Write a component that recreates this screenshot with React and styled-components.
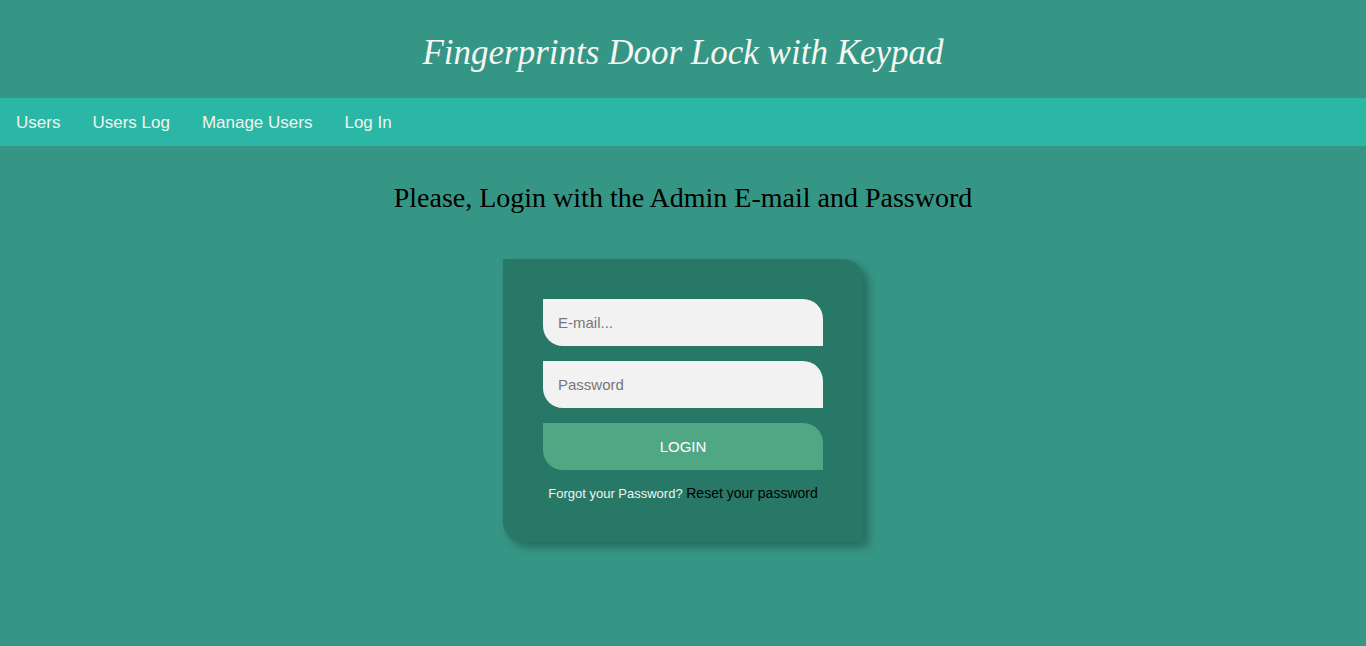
import React from "react";
import styled, { createGlobalStyle } from "styled-components";

const GlobalStyle = createGlobalStyle`
  html, body {
    margin: 0;
    padding: 0;
    background-color: #369685;
    font-family: "Liberation Serif", "Times New Roman", serif;
  }
`;

const Page = styled.div`
  min-height: 646px;
  background-color: #369685;
`;

const Header = styled.header`
  height: 98px;
  box-sizing: border-box;
  padding-top: 8px;
  display: flex;
  align-items: center;
  justify-content: center;

  h1 {
    margin: 0;
    font-family: "Liberation Serif", "Times New Roman", serif;
    font-style: italic;
    font-weight: normal;
    font-size: 35px;
    color: #f4f7f2;
  }
`;

const Nav = styled.nav`
  height: 48px;
  background-color: #2ab7a5;
  display: flex;
  align-items: center;
`;

const NavLink = styled.a`
  padding: 0 16px;
  font-family: "Liberation Sans", Arial, sans-serif;
  font-size: 17px;
  line-height: 20px;
  margin-top: 1px;
  color: #eef5ef;
  text-decoration: none;
  cursor: pointer;
`;

const Heading = styled.h2`
  margin: 36px 0 0;
  text-align: center;
  font-family: "Liberation Serif", "Times New Roman", serif;
  font-weight: normal;
  font-size: 28px;
  line-height: 32px;
  color: #000;
`;

const Card = styled.form`
  width: 280px;
  margin: 45px auto 0;
  padding: 40px;
  background-color: #287868;
  border-radius: 0 20px 0 20px;
  box-shadow: 5px 5px 10px rgba(0, 0, 0, 0.3);
  display: flex;
  flex-direction: column;
  gap: 15px;
`;

const Input = styled.input`
  box-sizing: border-box;
  width: 100%;
  height: 47px;
  border: none;
  outline: none;
  border-radius: 0 20px 0 20px;
  background-color: #f2f2f2;
  padding: 0 15px;
  font-family: "Liberation Sans", Arial, sans-serif;
  font-size: 15px;
  color: #333;

  &::placeholder {
    color: #777;
  }
`;

const Button = styled.button`
  width: 100%;
  height: 47px;
  border: none;
  border-radius: 0 20px 0 20px;
  background-color: #4fa883;
  color: #fff;
  font-family: "Liberation Sans", Arial, sans-serif;
  font-size: 15px;
  cursor: pointer;
`;

const Message = styled.p`
  margin: 0;
  text-align: center;
  font-family: "Liberation Sans", Arial, sans-serif;
  font-size: 13px;
  line-height: 16px;
  color: #eef5ef;

  a {
    font-size: 14px;
    color: #000;
    text-decoration: none;
  }
`;

const App = () => {
  return (
    <Page>
      <GlobalStyle />
      <Header>
        <h1>Fingerprints Door Lock with Keypad</h1>
      </Header>
      <Nav>
        <NavLink>Users</NavLink>
        <NavLink>Users Log</NavLink>
        <NavLink>Manage Users</NavLink>
        <NavLink>Log In</NavLink>
      </Nav>
      <Heading>Please, Login with the Admin E-mail and Password</Heading>
      <Card onSubmit={(e) => e.preventDefault()}>
        <Input type="email" placeholder="E-mail..." />
        <Input type="password" placeholder="Password" />
        <Button type="submit">LOGIN</Button>
        <Message>
          Forgot your Password? <a href="#">Reset your password</a>
        </Message>
      </Card>
    </Page>
  );
};

export default App;
